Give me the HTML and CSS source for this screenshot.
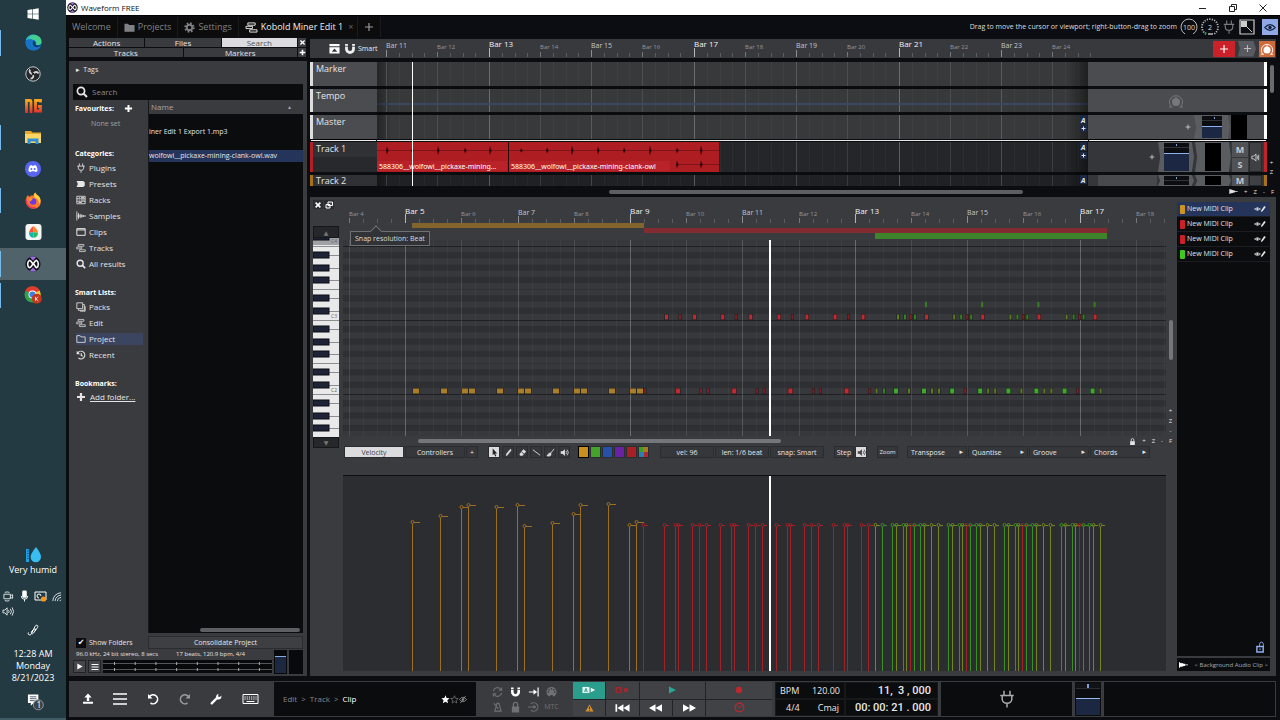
FILE: index.html
```html
<!DOCTYPE html>
<html lang="en">
<head>
<meta charset="utf-8">
<title>Waveform FREE</title>
<link rel="stylesheet" href="styles.css">
</head>
<body>
<svg class="defs" aria-hidden="true">
  <symbol id="i-logo" viewBox="0 0 16 16"><circle cx="8" cy="8" r="7.600" fill="#101018"/><path d="M5 1.300a7 7 0 0 1 6 0L8 4.500zM5 14.700a7 7 0 0 0 6 0L8 11.500z" fill="#a46be8"/><path d="M4.800 4.300C2 5.500 2 10.500 4.500 11.700 6 11.500 7 9 8 8s2 3.500 3.500 3.700C14 10.500 14 5.500 11.200 4.300M5.500 4.800L8 8l2.500-3.200" fill="none" stroke="#fff" stroke-width="1.600" stroke-linecap="round" stroke-linejoin="round"/></symbol>
  <symbol id="i-plus" viewBox="0 0 10 10"><path d="M5 1v8M1 5h8" stroke="currentColor" stroke-width="2.200"/></symbol>
  <symbol id="i-plus-thin" viewBox="0 0 10 10"><path d="M5 1v8M1 5h8" stroke="currentColor" stroke-width="1.200"/></symbol>
  <symbol id="i-x" viewBox="0 0 10 10"><path d="M2 2l6 6M8 2l-6 6" stroke="currentColor" stroke-width="2"/></symbol>
  <symbol id="i-search" viewBox="0 0 12 12"><circle cx="5" cy="5" r="3.600" fill="none" stroke="currentColor" stroke-width="1.700"/><path d="M7.700 7.700l3.300 3.300" stroke="currentColor" stroke-width="2"/></symbol>
  <symbol id="i-folder-solid" viewBox="0 0 12 12"><path d="M.5 2h4l1 1.300h6V10.500H.5z" fill="currentColor"/></symbol>
  <symbol id="i-folder" viewBox="0 0 12 12"><path d="M1 2h4l1 1.500h5V10H1z" fill="none" stroke="currentColor"/></symbol>
  <symbol id="i-gear" viewBox="0 0 12 12"><circle cx="6" cy="6" r="3" fill="none" stroke="currentColor" stroke-width="2"/><circle cx="6" cy="6" r="4.700" fill="none" stroke="currentColor" stroke-width="1.900" stroke-dasharray="1.850 1.850"/></symbol>
  <symbol id="i-edit" viewBox="0 0 14 12"><path d="M3 1h8v2.500H3zM1 4.700h7v2.500H1zM5 8.500h8V11H5z" fill="none" stroke="currentColor"/></symbol>
  <symbol id="i-plug" viewBox="0 0 12 12"><path d="M4 .5v3M8 .5v3M1.500 3.700h9M2.800 3.700v2.500a3.200 2.600 0 0 0 6.400 0V3.700M6 9v2.700" fill="none" stroke="currentColor"/></symbol>
  <symbol id="i-preset" viewBox="0 0 12 12"><path d="M1 2.500h7.500l2 1.500v4l-2 1.500H1V8l1-.8V4.800L1 4z" fill="currentColor"/></symbol>
  <symbol id="i-rack" viewBox="0 0 12 12"><path d="M1 1.500h10v9H1zM1 4.500h10M1 7.500h10M3.500 3h1M6 3h4M3.500 6h1M6 6h4M3 9h4" fill="none" stroke="currentColor"/></symbol>
  <symbol id="i-wave" viewBox="0 0 12 12"><path d="M1 .5v11M3 2.500v7M5 3.500v5M7 4v4M9 5v2M1 6h11" stroke="currentColor" fill="none"/></symbol>
  <symbol id="i-clip" viewBox="0 0 12 12"><path d="M1 2h10v8H1zM1 3.500h10" fill="none" stroke="currentColor" stroke-width="1.200"/></symbol>
  <symbol id="i-packs" viewBox="0 0 12 12"><path d="M1 1h7v7H1zM8.500 3H10v7H3V8.500M11 5v6H5" fill="none" stroke="currentColor"/></symbol>
  <symbol id="i-recent" viewBox="0 0 12 12"><path d="M2.500 3A4.600 4.600 0 1 1 3 9.600M6.300 3.800v2.700L8 7.500" fill="none" stroke="currentColor" stroke-width="1.400"/><path d="M.8 1v4h4z" fill="currentColor"/></symbol>
  <symbol id="i-knob" viewBox="0 0 16 16"><circle cx="8" cy="9" r="4" fill="currentColor"/><path d="M8 7V3.500" stroke="currentColor" stroke-width="1"/><path d="M3.300 13.700a6.500 6.500 0 1 1 9.400 0M1 14h3.500M11.500 14H15" fill="none" stroke="currentColor" stroke-width="1"/></symbol>
  <symbol id="i-magnet" viewBox="0 0 12 12"><path d="M2.500 1v5a3.500 3.500 0 0 0 7 0V1" fill="none" stroke="currentColor" stroke-width="2.800"/><path d="M1 3.300h3.200M7.800 3.300H11" stroke="#3a3b3f" stroke-width=".8"/></symbol>
  <symbol id="i-speaker" viewBox="0 0 12 12"><path d="M1 4.200h2.500L6.500 1.500v9L3.500 7.800H1z" fill="currentColor"/><path d="M8 4a3 3 0 0 1 0 4M9.500 2.300a5.500 5.500 0 0 1 0 7.400" fill="none" stroke="currentColor"/></symbol>
  <symbol id="i-eyepen" viewBox="0 0 14 8"><path d="M.5 4Q4 .5 7.500 4 4 7.500.5 4z" fill="none" stroke="currentColor" stroke-width=".8"/><circle cx="4" cy="4" r="1.300" fill="currentColor"/><path d="M8 7.500l.5-2 3.500-5 1.700 1.200-3.700 5z" fill="currentColor"/></symbol>
  <symbol id="i-lock" viewBox="0 0 12 12"><path d="M2 5.500h8V12H2z" fill="currentColor"/><path d="M3.700 6V3.300a2.300 2.300 0 0 1 4.600 0V6" fill="none" stroke="currentColor" stroke-width="1.400"/></symbol>
  <symbol id="i-audio" viewBox="0 0 10 6"><path d="M0 0h1l.5 1 1-.6.7 1 1-.6.8.9h1.500l.5.700H10v1H7l-.5.700H5l-.8.900-1-.6-.7 1-1-.6L1 6H0z" fill="currentColor"/></symbol>
</svg>

<aside class="taskbar">
  <button class="tb start" aria-label="Start"><svg viewBox="0 0 12 12" width="12" height="12"><path d="M.5 2l4.700-.7v4.400H.5zM5.800 1.200L11.700.3v5.400H5.800zM.5 6.300h4.700v4.400L.5 10zM5.800 6.300h5.900v5.400l-5.900-.9z" fill="#fff"/></svg></button>
  <nav class="tb-apps">
    <button class="tb open" aria-label="Edge"><svg viewBox="0 0 18 18" width="17" height="17"><circle cx="9" cy="9" r="8.500" fill="#1b7fd4"/><path d="M1 7C2 2 7 0 11 1c5 1 7 5 6.500 8-.5 2.500-3.500 3.500-6 2.500C13 9 11 6 8 6 5 5.500 2 6 1 7z" fill="#45cf8f"/><path d="M1 7c1-4 5-6.500 9-6-3 0-6 2-5 6z" fill="#2fb5d6"/><path d="M1 7c2-2 6-2 8 0-3 1-3 4-1 6s6 1.500 8 .5C14 17 9 18.500 5 16S0 10 1 7z" fill="#1673c4"/><path d="M9 7c2 1 3 3 2.200 4.500 2 1 5 .5 6.300-1-.5 2-3 4-6 3.500C8 13.500 7 9 9 7z" fill="#0c3f77"/></svg></button>
    <button class="tb" aria-label="OBS"><svg viewBox="0 0 16 16" width="16" height="16"><circle cx="8" cy="8" r="7.200" fill="#26272b" stroke="#c4c7c9"/><path d="M7.500 8c-2.500-.5-3.500-2.500-2.500-4.500M8.500 7.500c1.500-2 4-2 5 0M8 8.500c1 2 0 4-2.500 4.200" stroke="#d4d6d8" stroke-width="1.800" fill="none"/><circle cx="8" cy="8" r="1.300" fill="#26272b"/></svg></button>
    <button class="tb" aria-label="Newgrounds"><svg viewBox="0 0 17 15" width="17" height="15"><defs><linearGradient id="ng" x2="0" y2="1"><stop offset="0" stop-color="#f7a51c"/><stop offset="1" stop-color="#e52e2a"/></linearGradient></defs><path d="M1.500 15V2.500h3.500a1 1 0 0 1 1 1V15M15.500 4.500v-2h-5v10.500h5V8.500H13" fill="none" stroke="url(#ng)" stroke-width="2.800"/></svg></button>
    <button class="tb open" aria-label="File Explorer"><svg viewBox="0 0 16 14" width="16" height="14"><path d="M0 1h6l1.500 1.500H16V13H0z" fill="#e9a928"/><path d="M0 4h16v9H0z" fill="#fbd667"/><path d="M2.500 14V8.500h11V14h-3v-2.500h-5V14z" fill="#2e8fd8"/></svg></button>
    <button class="tb" aria-label="Discord"><svg viewBox="0 0 16 16" width="16" height="16"><circle cx="8" cy="8" r="8" fill="#5865f2"/><path d="M5 4.500l1.500-.5.5.8h2l.5-.8 1.500.5c1 1.500 1.600 3.500 1.500 5.500-.8.700-1.500 1-2.300 1.200l-.6-1H6.400l-.6 1C5 11 4.300 10.700 3.500 10 3.400 8 4 6 5 4.500z" fill="#fff"/><circle cx="6.400" cy="8" r="1" fill="#5865f2"/><circle cx="9.600" cy="8" r="1" fill="#5865f2"/></svg></button>
    <button class="tb open" aria-label="Firefox"><svg viewBox="0 0 18 18" width="17" height="17"><path d="M1.500 6C2 4.500 2.500 4 3.500 3.500c0 1 .5 1.500 1.500 1.500 1-1.500 2.500-1.500 4-1C9 2 10 1 11 .5c.2 2 2.500 2.500 4 4.500 2 3 2.500 6.500.5 9.500-3 4-10 4-13 0C1 12 .5 9 1.500 6z" fill="#ff7a2f"/><path d="M11 .5c.2 2 2.500 2.500 4 4.500 2 3 1.500 6 0 7.500C15 8 12 7 10 5.500 9 3.500 10 1 11 .5z" fill="#ffd43a"/><path d="M1.200 8c0 7 6 9.500 10 8.500-5 1.500-10-2-10-8.500z" fill="#e9254f" stroke="#f0355a" stroke-width="1.500"/><circle cx="8.500" cy="10" r="3.500" fill="#6d3ae0"/><path d="M4.500 7c1.500-1 3-.5 4 .5-1 .5-2 1-2 2.500-1.500 0-2.500-1.500-2-3z" fill="#ff9b33"/></svg></button>
    <button class="tb" aria-label="Drop app"><svg viewBox="0 0 17 16" width="17" height="16"><rect x=".5" width="16" height="16" rx="3" fill="#f4f5f5"/><path d="M8.500 2C6 4 4 6.500 4 9l4.500-1z" fill="#ff4f3d"/><path d="M8.500 2C11 4 13 6.500 13 9L8.500 8z" fill="#ff8a27"/><path d="M4 9c0 3 2 4.700 4.500 4.700V8z" fill="#11b5b0"/><path d="M13 9c0 3-2 4.700-4.500 4.700V8z" fill="#2cb865"/></svg></button>
    <button class="tb open active" aria-label="Waveform"><svg width="16" height="16"><use href="#i-logo"/></svg></button>
    <button class="tb open" aria-label="Chrome"><svg viewBox="0 0 18 18" width="18" height="18"><circle cx="8.500" cy="8.500" r="8" fill="#2fa34b"/><path d="M1.500 4.500a8 8 0 0 1 14 0L8.500 9z" fill="#e33b2e"/><path d="M15.500 4.500a8 8 0 0 1-6 12L8 8.500z" fill="#fbc72e"/><circle cx="8.500" cy="8.500" r="4" fill="#fff"/><circle cx="8.500" cy="8.500" r="3.100" fill="#3c7fe8"/><circle cx="12.800" cy="12.800" r="5" fill="#c5371b"/><path d="M11.500 10.800v4M14.300 10.800l-2.500 2.200 2.500 1.800" stroke="#fff" stroke-width=".8" fill="none"/></svg></button>
  </nav>
  <div class="weather"><svg viewBox="0 0 17 16" width="17" height="16"><path d="M1 2h3v13H1z" fill="#1ba0e6"/><path d="M2 4h2M2 6.500h2M2 9h2M2 11.500h2" stroke="#0c6ba8"/><path d="M11 0c3 4 5 7 5 10a5.200 5.200 0 0 1-10.400 0C5.600 7 8 4 11 0z" fill="#38bdf2"/></svg><span>Very humid</span></div>
  <div class="tray">
    <svg viewBox="0 0 12 12" width="11" height="11"><path d="M1 3.500h7v5H1zM8 5l2.500-1v4L8 7M2 1.500q2.500-1 5 0M2 10.500q2.500 1 5 0" fill="none" stroke="#fff" stroke-width=".9"/></svg>
    <svg viewBox="0 0 12 12" width="11" height="12"><rect x="3.500" width="5" height="8" rx="1.500" fill="#fff"/><path d="M2.500 6q0 3.500 3.500 3.500T9.500 6M6 9v3" fill="none" stroke="#fff"/></svg>
    <svg viewBox="0 0 13 12" width="13" height="12"><path d="M1 2h11v8H1zM5 8a2 2 0 1 1 2-2" fill="none" stroke="#fff"/><circle cx="9.500" cy="9" r="2.600" fill="#ff9510"/></svg>
    <svg viewBox="0 0 12 12" width="11" height="11"><path d="M2 11A9 9 0 0 1 11 2M4.500 11A6.500 6.500 0 0 1 11 4.500M7 11a4 4 0 0 1 4-4M9.500 11L11 9.500" fill="none" stroke="#dfe5e8" stroke-width="1"/></svg>
    <svg viewBox="0 0 13 12" width="12" height="11"><path d="M1 4.500h2L5.500 2v8L3 7.500H1zM7 4.500q1.500 1.500 0 3M9 3q2.500 3 0 6M11 1.500q3.200 4.500 0 9" fill="none" stroke="#fff" stroke-width=".9"/></svg>
  </div>
  <svg class="pen" viewBox="0 0 12 12" width="12" height="12"><path d="M1.500 8.500C0 11 4 12 4.500 9.500L8 2.500C9 0 12 1.500 10.500 3.500L6.500 9C5 11 3.500 8.500 5 7L6.500 5.500Q10 4 8 7" fill="none" stroke="#fff"/></svg>
  <div class="clock"><span>12:28 AM</span><span>Monday</span><span>8/21/2023</span></div>
  <button class="notes" aria-label="Notifications"><svg viewBox="0 0 18 18" width="17" height="18"><path d="M1 1h11v9H7l-3 3v-3H1z" fill="#fff"/><path d="M3 3.500h7M3 5.500h7M3 7.500h5" stroke="#234" stroke-width=".8"/><circle cx="12" cy="12" r="5.300" fill="#3d4446" stroke="#999"/><text x="10" y="15" font-size="9" fill="#fff">1</text></svg></button>
</aside>

<div class="app">
  <header class="titlebar">
    <svg width="11" height="11"><use href="#i-logo"/></svg><h1>Waveform FREE</h1>
    <div class="win">
      <button aria-label="Minimize"><svg viewBox="0 0 8 8" width="8" height="8"><path d="M0 4.500h7" stroke="#222"/></svg></button>
      <button aria-label="Restore"><svg viewBox="0 0 8 8" width="8" height="8"><path d="M.5 2.500h5v5h-5zM2.500 2.500v-2h5v5h-2" fill="none" stroke="#222"/></svg></button>
      <button aria-label="Close"><svg viewBox="0 0 8 8" width="8" height="8"><path d="M.5.500l7 7M7.500.500l-7 7" stroke="#222"/></svg></button>
    </div>
  </header>
  <div class="tabs">
    <nav>
      <button class="tab">Welcome</button>
      <button class="tab"><svg width="11" height="11"><use href="#i-folder-solid"/></svg>Projects</button>
      <button class="tab"><svg width="11" height="11"><use href="#i-gear"/></svg>Settings</button>
      <button class="tab current"><svg width="13" height="11"><use href="#i-edit"/></svg>Kobold Miner Edit 1<span class="dim">×</span></button>
      <button class="tab add" aria-label="New tab"><svg width="10" height="10"><use href="#i-plus-thin"/></svg></button>
    </nav>
    <p class="hint">Drag to move the cursor or viewport; right-button-drag to zoom</p>
    <div class="quick">
      <svg viewBox="0 0 18 18" width="18" height="18"><path d="M5 16A8 8 0 1 1 13 16" fill="none" stroke="#bbb"/><text x="9" y="11.500" text-anchor="middle" font-size="7" fill="#ddd">100</text></svg>
      <svg viewBox="0 0 18 18" width="18" height="18"><path d="M5 16A8 8 0 1 1 13 16" fill="none" stroke="#bbb" stroke-width="1.800" stroke-dasharray="1.200 1.300"/><path d="M7 16h5" stroke="#bbb" stroke-width="1.500"/><circle cx="4.500" cy="15" r="1" fill="#1ea43a"/><text x="9" y="11.500" text-anchor="middle" font-size="7" fill="#ddd">2</text></svg>
      <svg class="faint" width="14" height="14"><use href="#i-plug"/></svg>
      <svg viewBox="0 0 16 16" width="16" height="16"><path d="M1 1h14v14H1z" fill="none" stroke="#ccc" stroke-width="1.200"/><path d="M2 2h6v6H2z" fill="#ccc"/><path d="M7 7l6 6" stroke="#ccc"/></svg>
      <button class="eye" aria-label="View"><svg viewBox="0 0 14 10" width="12" height="9"><path d="M1 5Q7-1.500 13 5 7 11.500 1 5z" fill="none" stroke="#16233d" stroke-width="1.400"/><circle cx="7" cy="5" r="2" fill="#16233d"/></svg></button>
    </div>
  </div>

  <main class="work">
    <section class="side">
      <div class="side-tabs">
        <div class="tabrow"><button>Actions</button><button>Files</button><button class="on">Search</button></div>
        <button class="sq" aria-label="Close"><svg width="7" height="7"><use href="#i-x"/></svg></button>
        <div class="tabrow"><button>Tracks</button><button>Markers</button></div>
        <button class="sq" aria-label="Add"><svg width="7" height="7"><use href="#i-plus"/></svg></button>
      </div>
      <div class="browser">
        <button class="tags"><span>▸</span> Tags</button>
        <label class="search"><svg width="12" height="12"><use href="#i-search"/></svg><input type="text" placeholder="Search" aria-label="Search"></label>
        <div class="cols">
          <div class="cats">
            <h2>Favourites: <svg width="9" height="9"><use href="#i-plus"/></svg></h2>
            <p class="none">None set</p>
            <h2>Categories:</h2>
            <button><svg><use href="#i-plug"/></svg>Plugins</button>
            <button><svg><use href="#i-preset"/></svg>Presets</button>
            <button><svg><use href="#i-rack"/></svg>Racks</button>
            <button><svg><use href="#i-wave"/></svg>Samples</button>
            <button><svg><use href="#i-clip"/></svg>Clips</button>
            <button><svg><use href="#i-edit"/></svg>Tracks</button>
            <button><svg><use href="#i-search"/></svg>All results</button>
            <h2>Smart Lists:</h2>
            <button><svg><use href="#i-packs"/></svg>Packs</button>
            <button><svg><use href="#i-edit"/></svg>Edit</button>
            <button class="sel"><svg><use href="#i-folder"/></svg>Project</button>
            <button><svg><use href="#i-recent"/></svg>Recent</button>
            <h2>Bookmarks:</h2>
            <a href="#" class="addf"><svg><use href="#i-plus"/></svg><span>Add folder...</span></a>
            <label class="show"><input type="checkbox" checked>Show Folders</label>
          </div>
          <div class="files">
            <div class="list">
              <table>
                <thead><tr><th>Name<span>▴</span></th></tr></thead>
                <tbody><tr><td>iner Edit 1 Export 1.mp3</td></tr><tr class="sel"><td>wolfowi__pickaxe-mining-clank-owl.wav</td></tr></tbody>
              </table>
              <div class="thumb"></div>
            </div>
            <button class="consol">Consolidate Project</button>
          </div>
        </div>
        <div class="preview">
          <div class="pv">
            <p><span>96.0 kHz, 24 bit stereo, 8 secs</span><span>17 beats, 120.9 bpm, 4/4</span></p>
            <div class="pvrow">
              <button aria-label="Play"><svg viewBox="0 0 8 8" width="7" height="7"><path d="M1.500.500L7.500 4l-6 3.500z" fill="#fff"/></svg></button>
              <button aria-label="Menu"><svg viewBox="0 0 8 8" width="8" height="8"><path d="M.5 1.500h7M.5 4h7M.5 6.500h7" stroke="#fff" stroke-width="1.200"/></svg></button>
              <svg class="pvwave" id="pvwave"></svg>
            </div>
          </div>
          <div class="pvfader"></div><div class="pvmeter"></div>
        </div>
      </div>
    </section>

    <section class="right">
      <div class="arr-head">
        <div class="ah-left"><svg viewBox="0 0 12 12" width="11" height="11"><path d="M.5 1h11v2.500H.5zM.5 4.500h11V11.500H.5z" fill="#fff"/><path d="M6 6l3 3.500H3z" fill="#333"/></svg><svg width="12" height="12"><use href="#i-magnet"/></svg><span>Smart</span></div>
        <svg class="ruler" id="arrRuler"></svg>
        <div class="ah-right">
          <button class="redb" aria-label="Add track"><svg width="10" height="10"><use href="#i-plus-thin"/></svg></button>
          <button class="arrowb" aria-label="Add plugin"><svg width="9" height="9"><use href="#i-plus-thin"/></svg></button>
          <button class="orgb" aria-label="Automation"><svg width="14" height="14"><use href="#i-knob"/></svg></button>
        </div>
      </div>
      <div class="lanes">
        <div class="rows heads"><div>Marker</div><div>Tempo</div><div>Master</div><div class="t1">Track 1</div><div class="t2">Track 2</div></div>
        <svg class="canvas" id="arrCanvas"></svg>
        <div class="rows mixer">
          <div></div>
          <div class="mid"><svg class="faint" width="16" height="16"><use href="#i-knob"/></svg></div>
          <div><svg class="pl" width="6" height="6"><use href="#i-plus-thin"/></svg><span class="dev"><i class="fader"></i></span><i class="mtr"></i><span class="gap"></span></div>
          <div class="t1"><svg class="pl" width="6" height="6"><use href="#i-plus-thin"/></svg><span class="dev"><i class="fader"></i></span><span class="dev"><i class="mtr"></i></span><span class="ms"><button>M</button><button>S</button></span><button class="spk" aria-label="Output"><svg viewBox="0 0 10 10" width="9" height="9"><path d="M1 3.500h2L5.500 1v8L3 6.500H1zM7 3v4M8.500 2v6" fill="none" stroke="#ccc"/></svg></button></div>
          <div class="t2"><span class="blank"></span><span class="dev"><i class="fader"></i></span><span class="dev"><i class="mtr"></i></span><span class="ms"><button>M</button></span><span class="spk"></span></div>
        </div>
        <div class="vbar"><div class="vthumb"></div><span>+</span><span>Z</span></div>
      </div>
      <div class="hbar"><div class="hthumb"></div><div class="zm"><svg width="9" height="5"><use href="#i-audio"/></svg><span>+</span><span>Z</span><span>-</span></div><span class="f">F</span></div>

      <div class="editor">
        <div class="ed-left">
          <div class="ed-btns"><button aria-label="Close editor"><svg width="8" height="8"><use href="#i-x"/></svg></button><button aria-label="Pop out"><svg viewBox="0 0 8 8" width="8" height="8"><path d="M3 1h4.500v3.500H3zM1 3.500h4V7H1z" fill="#3a3b3f" stroke="#fff"/></svg></button></div>
          <div class="piano"><button aria-label="Up">▲</button><svg id="piano"></svg><button aria-label="Down">▼</button></div>
        </div>
        <div class="ed-main">
          <svg class="rruler" id="rollRuler"></svg>
          <div class="snap">Snap resolution: Beat</div>
          <svg class="roll" id="roll"></svg>
          <div class="rbar"><div class="rthumb"></div></div>
          <div class="tools">
            <div class="grp"><button class="w on">Velocity</button><button class="w">Controllers</button><button class="pm">+</button></div>
            <div class="grp icons">
              <button class="on" aria-label="Select"><svg viewBox="0 0 10 10"><path d="M3 .5L8 6H5.700L7 9l-1.200.500L4.500 6.500 3 8z" fill="#222"/></svg></button>
              <button aria-label="Pencil"><svg viewBox="0 0 10 10"><path d="M2 9l.6-2.500L7 1l1.500 1.200L4 8z" fill="#ddd"/></svg></button>
              <button aria-label="Eraser"><svg viewBox="0 0 10 10"><path d="M1.500 7L6 1.500 9 4 5 8.500H2.500z" fill="#ddd"/><path d="M4 4.500l2.500 2" stroke="#333"/></svg></button>
              <button aria-label="Line"><svg viewBox="0 0 10 10"><path d="M1 2l8 6" stroke="#ddd"/></svg></button>
              <button aria-label="Brush"><svg viewBox="0 0 10 10"><path d="M9 1L5 6M5 5.500C3 5 3 7.500 1 8.500c2 1 5 .5 4.500-2z" fill="#ddd" stroke="#ddd"/></svg></button>
              <button aria-label="Audition"><svg><use href="#i-speaker"/></svg></button>
            </div>
            <div class="grp sw"><button class="s1 on" aria-label="Orange"></button><button class="s2" aria-label="Green"></button><button class="s3" aria-label="Blue"></button><button class="s4" aria-label="Purple"></button><button class="s5" aria-label="Red"></button><button class="s6" aria-label="Mixed"></button></div>
            <div class="grp vals"><button>vel: 96</button><button>len: 1/6 beat</button><button>snap: Smart</button></div>
            <div class="grp step"><button>Step</button><button class="on" aria-label="Sound"><svg><use href="#i-speaker"/></svg></button></div>
            <button class="zoomb">Zoom</button>
            <div class="grp menus"><button>Transpose<span>▸</span></button><button>Quantise<span>▸</span></button><button>Groove<span>▸</span></button><button>Chords<span>▸</span></button></div>
          </div>
          <svg class="vel" id="vel"></svg>
        </div>
        <div class="ed-v"><div class="evthumb"></div><div class="evz"><span>+</span><span>Z</span><span>-</span><span>F</span></div><div class="evl"><svg width="7" height="7"><use href="#i-lock"/></svg><span>+</span><span>Z</span><span>-</span></div></div>
        <div class="clips">
          <ul>
            <li class="sel"><i class="o"></i><span>New MIDI Clip</span><svg><use href="#i-eyepen"/></svg></li>
            <li><i class="r"></i><span>New MIDI Clip</span><svg><use href="#i-eyepen"/></svg></li>
            <li><i class="r"></i><span>New MIDI Clip</span><svg><use href="#i-eyepen"/></svg></li>
            <li><i class="g"></i><span>New MIDI Clip</span><svg><use href="#i-eyepen"/></svg></li>
          </ul>
          <svg class="unlock" viewBox="0 0 10 13" width="9" height="12"><path d="M1 6h7v6H1z" fill="none" stroke="#8fb0ee" stroke-width="1.600"/><path d="M4 6V3.500Q4 1 6 1t2.200 2.500V6M4.500 8v2" fill="none" stroke="#8fb0ee"/></svg>
          <button class="bgclip"><svg width="9" height="6"><use href="#i-audio"/></svg>&lt; Background Audio Clip &gt;</button>
        </div>
      </div>
    </section>
  </main>

  <footer class="transport">
    <div class="tbtns">
      <button aria-label="Export"><svg viewBox="0 0 12 12"><path d="M6 .5L9.700 4.500H7.200V8H4.800V4.500H2.300zM1 8.800h10v2H1z" fill="#fff"/></svg></button>
      <button aria-label="Menu"><svg viewBox="0 0 14 12" class="wide"><path d="M0 1h14M0 6h14M0 11h14" stroke="#fff" stroke-width="1.400"/></svg></button>
      <button aria-label="Undo"><svg viewBox="0 0 12 12"><path d="M2.500 3.500A4.500 4.500 0 1 1 3.500 10" fill="none" stroke="#fff" stroke-width="1.600"/><path d="M1 1v4.500h4.500z" fill="#fff"/></svg></button>
      <button class="faint" aria-label="Redo"><svg viewBox="0 0 12 12"><path d="M9.500 3.500A4.500 4.500 0 1 0 8.500 10" fill="none" stroke="#999" stroke-width="1.600"/><path d="M11 1v4.500H6.500z" fill="#999"/></svg></button>
      <button aria-label="Tools"><svg viewBox="0 0 12 12"><path d="M1.700 10.300L7 5" stroke="#fff" stroke-width="2.400" stroke-linecap="round"/><path d="M8.500 1l-.5 2.500L10 4l1.300-1.500C12 5 10 7 7.500 6.500 5 5 6 1.500 8.500 1z" fill="#fff"/></svg></button>
      <button aria-label="Keyboard"><svg viewBox="0 0 16 12" class="kb"><path d="M.5 1.500h15v9H.5z" fill="none" stroke="#fff"/><path d="M2 4h12M2 6h12" stroke="#fff" stroke-dasharray="1.200 1"/><path d="M4 8.500h8" stroke="#fff"/></svg></button>
    </div>
    <div class="crumb"><span>Edit</span><span>&gt;</span><span>Track</span><span>&gt;</span><b>Clip</b><svg viewBox="0 0 28 10" width="26" height="9"><path d="M4.500.3L5.800 3.400l3.300.300-2.500 2.200.8 3.200-2.900-1.700L1.600 9.100l.8-3.200L0 3.700l3.300-.3z" fill="#fff"/><path d="M14.500.800l1.200 2.900 3 .2-2.300 2 .7 3-2.600-1.600L11.900 8.900l.7-3-2.300-2 3-.2z" fill="none" stroke="#888" stroke-width=".7"/><path d="M20 5q4-5 8 0-4 5-8 0zM27 1l-6 8" fill="none" stroke="#888"/><circle cx="24" cy="5" r="1.400" fill="#888"/></svg></div>
    <div class="modes">
      <svg viewBox="0 0 12 12"><path d="M1.500 5A4.500 4.500 0 0 1 9.500 3M10.500 7a4.500 4.500 0 0 1-8 2M10.500 1v3h-3M1.500 11V8h3" fill="none" stroke="#707175" stroke-width="1.200"/></svg>
      <svg><use href="#i-magnet"/></svg>
      <svg viewBox="0 0 12 12"><path d="M1 6h7M11 1v10" stroke="#fff" stroke-width="1.300"/><path d="M6 3l4 3-4 3z" fill="#fff"/></svg>
      <svg viewBox="0 0 12 12"><circle cx="6" cy="6" r="5.500" fill="#707175"/><g fill="#333"><circle cx="2.500" cy="6" r=".9"/><circle cx="9.500" cy="6" r=".9"/><circle cx="6" cy="2.500" r=".9"/><circle cx="3.500" cy="3.500" r=".9"/><circle cx="8.500" cy="3.500" r=".9"/><path d="M4.500 9.500h3V12h-3z"/></g></svg>
      <svg viewBox="0 0 12 12"><path d="M3 10.500L5.500 2h2L10 10.500zM7 8L2 2" fill="none" stroke="#707175" stroke-width="1.200"/></svg>
      <svg class="dimc"><use href="#i-lock"/></svg>
      <svg viewBox="0 0 12 12"><path d="M3 2.500a4.700 4.700 0 1 1 0 7M0 6h7" fill="none" stroke="#707175" stroke-width="1.200"/><path d="M6 3.500L9 6 6 8.500z" fill="#707175"/></svg>
      <span>MTC</span>
    </div>
    <div class="trans">
      <button class="auto" aria-label="Read automation"><svg viewBox="0 0 16 8" width="14" height="8"><path d="M.5.500h8v7h-8z" fill="#e6f5f2"/><path d="M2.800 6.500L4.500 2l1.700 4.500M3.400 5h2.200" stroke="#2a9d8c" fill="none"/><path d="M10 1.500l5 2.500-5 2.500z" fill="#fff"/></svg></button>
      <button aria-label="Write automation"><svg viewBox="0 0 16 8" width="14" height="8"><path d="M.5.500h7v7h-7z" fill="#a5262b"/><path d="M2.500 6.500L4 2l1.500 4.500M3 5h2" stroke="#3a3b3f" fill="none"/><circle cx="12.500" cy="4" r="2.700" fill="#a5262b"/></svg></button>
      <button class="x2" aria-label="Play"><svg viewBox="0 0 8 8" width="8" height="8"><path d="M1 .5L8 4 1 7.500z" fill="#27a79a"/></svg></button>
      <button class="x2" aria-label="Record"><svg viewBox="0 0 8 8" width="8" height="8"><circle cx="4" cy="4" r="3.200" fill="#c0272d"/></svg></button>
      <button aria-label="Warning"><svg viewBox="0 0 10 8" width="9" height="8"><path d="M5 0l4.500 8h-9z" fill="#d3912a"/><path d="M5 2.500V5M5 6v1" stroke="#222"/></svg></button>
      <button aria-label="To start"><svg viewBox="0 0 16 8" width="15" height="8"><path d="M.5 0h1.800v8H.5zM9 0v8L2.500 4zM15.500 0v8L9 4z" fill="#fff"/></svg></button>
      <button aria-label="Rewind"><svg viewBox="0 0 14 8" width="13" height="8"><path d="M7 0v8L0 4zM14 0v8L7 4z" fill="#fff"/></svg></button>
      <button aria-label="Forward"><svg viewBox="0 0 14 8" width="13" height="8"><path d="M0 0v8l7-4zM7 0v8l7-4z" fill="#fff"/></svg></button>
      <button class="x2" aria-label="Retrospective record"><svg viewBox="0 0 12 12" width="11" height="11"><circle cx="6" cy="6" r="4.800" fill="none" stroke="#c0272d" stroke-width="1.200"/><path d="M3.500 5h2M6 7l2.500-3" stroke="#c0272d"/></svg></button>
    </div>
    <div class="info">
      <div class="two"><span>BPM</span><span>120.00</span></div><div class="time">11,  3 , 000</div>
      <div class="two sp"><span>4/4</span><span>Cmaj</span></div><div class="time">00: 00: 21 . 000</div>
    </div>
    <div class="well plugw"><svg width="18" height="18"><use href="#i-plug"/></svg></div>
    <div class="well fadew"><i class="bigfader"></i></div>
    <div class="well last"></div>
  </footer>
</div>
<script src="app.js"></script>
</body>
</html>
```
FILE: styles.css
```css
* { box-sizing: border-box; }
:root { --panel: #3a3b3f; --well: #0b0c0e; --ink: #e4e4e6; }
html, body { height: 100%; margin: 0; }
body { display: flex; background: #0c0d10; color: var(--ink); font: 8px/12px "Open Sans", "Noto Sans", sans-serif; overflow: hidden; }
button, input { font: inherit; color: inherit; background: none; border: 0; padding: 0; margin: 0; }
h1, h2, p, ul { margin: 0; padding: 0; font: inherit; }
svg { display: block; flex: none; }
.defs { position: absolute; width: 0; height: 0; }
.faint { color: #77787b; }

/* taskbar */
.taskbar { width: 66px; flex: none; background: #233a43; display: flex; flex-direction: column; align-items: center; border-bottom: 2px solid #3f5b66; color: #fff; font-size: 9px; line-height: 12px; }
.tb { flex: 1; width: 66px; display: flex; align-items: center; justify-content: center; position: relative; }
.start { flex: none; height: 27px; }
.tb-apps { height: 284px; display: flex; flex-direction: column; }
.tb.open::before { content: ""; position: absolute; left: 0; top: 3px; bottom: 3px; width: 1px; background: #76b9ed; }
.tb.active { background: #50626a; }
.weather { margin-top: auto; display: flex; flex-direction: column; align-items: center; line-height: 14px; }
.tray { width: 66px; display: grid; grid-template-columns: repeat(4, 16px); justify-items: center; row-gap: 4px; align-items: center; margin: 13px 0 7px; }
.pen { margin-bottom: 12px; }
.clock { display: flex; flex-direction: column; align-items: center; line-height: 12px; }
.notes { margin: 9px 0 7px 4px; }

.app { flex: 1; min-width: 0; display: flex; flex-direction: column; }
.titlebar { height: 15px; flex: none; background: #fff; color: #111; display: flex; align-items: center; gap: 3px; padding-left: 1px; }
.titlebar h1 { font-size: 8px; }
.win { margin-left: auto; display: flex; gap: 22px; padding-right: 13px; }
.tabs { height: 23px; flex: none; display: flex; align-items: center; background: #0b0d13; border-top: 1px solid #000; padding-right: 2px; }
.tabs nav { display: flex; height: 20px; }
.tab { display: flex; align-items: center; gap: 3px; padding: 0 6px; background: #0c0c0d; border-right: 1px solid #1a1b1e; color: #808184; font-size: 9px; }
.tab.current { color: #eee; padding-right: 4px; }
.tab.add { color: #999; padding: 0 6px; }
.dim { color: #666; margin-left: 2px; }
.hint { margin-left: auto; font-size: 7px; color: #ddd; }
.quick { display: flex; align-items: center; gap: 3px; margin-left: 3px; }
.eye { width: 16px; height: 16px; background: #8ea9e6; display: grid; place-items: center; margin-left: 4px; }

.work { flex: 1; min-height: 0; display: flex; gap: 3px; padding-left: 3px; }
.side { width: 238px; flex: none; display: flex; flex-direction: column; gap: 4px; }
.side-tabs { display: grid; grid-template-columns: 1fr 8px; grid-auto-rows: 9px; gap: 1px; padding-right: 1px; }
.tabrow { display: flex; gap: 1px; }
.tabrow button { flex: 1; background: var(--panel); line-height: 9px; font-size: 8px; }
.tabrow .on { background: #dcdcde; color: #555; }
.sq { background: var(--panel); display: grid; place-items: center; color: #fff; }
.browser { flex: 1; min-height: 0; background: var(--panel); padding: 3px 4px 2px; display: flex; flex-direction: column; }
.tags { align-self: flex-start; padding: 0 3px; font-size: 7px; line-height: 12px; margin-bottom: 8px; }
.tags span { font-family: "DejaVu Sans", sans-serif; margin-right: 2px; }
.search { height: 16px; flex: none; display: flex; align-items: center; background: var(--well); padding: 0 3px; gap: 4px; }
.search input { flex: 1; min-width: 0; outline: 0; }
.search input::placeholder { color: #8a8a8c; }
.cols { flex: 1; min-height: 0; display: flex; }
.cats { width: 75px; flex: none; display: flex; flex-direction: column; padding: 0 5px 0 3px; }
.cats h2 { font-weight: 700; font-size: 7px; margin: 14px 0 0 -1px; line-height: 13px; color: #fff; display: flex; align-items: center; gap: 10px; white-space: nowrap; }
.cats h2:first-child { margin-top: 2px; }
.none { padding-left: 15px; font-size: 7px; margin: 2px 0; line-height: 14px; color: #a0a0a3; }
.cats button, .addf { display: flex; align-items: center; gap: 3px; height: 12px; margin: 2px 0; text-align: left; white-space: nowrap; }
.cats button svg, .addf svg { width: 10px; height: 10px; color: #e6e6e6; }
.cats .sel { background: #3b4560; }
.addf { color: inherit; gap: 4px; margin-top: 1px; }
.show { margin-top: auto; display: flex; align-items: center; gap: 3px; font-size: 7px; height: 13px; white-space: nowrap; }
.show input { appearance: none; width: 10px; height: 10px; background: var(--well); display: grid; place-items: center; }
.show input:checked::before { content: "✔"; font: 8px/8px "DejaVu Sans"; color: #fff; }
.files { flex: 1; min-width: 0; display: flex; flex-direction: column; gap: 3px; }
.list { flex: 1; background: var(--well); border-left: 1px solid #17181b; display: flex; flex-direction: column; justify-content: space-between; }
.list table { border-collapse: collapse; width: 100%; font-size: 7px; }
th { background: var(--panel); height: 14px; font-weight: 400; font-size: 8px; text-align: left; color: #a6a6a9; padding: 0 12px 0 2px; }
th span { float: right; font: 6px/12px "DejaVu Sans"; }
td { padding: 12px 0 0; height: 24px; line-height: 12px; white-space: nowrap; }
tr.sel td { background: linear-gradient(transparent 12px, #25345a 12px); }
.thumb { height: 4px; width: 100px; border-radius: 2px; background: #5e5f63; align-self: flex-end; margin: 0 3px 1px 0; }
.consol { height: 13px; border: 1px solid #2b2c30; background: #3e3f43; font-size: 7px; line-height: 11px; }
.preview { flex: none; display: flex; gap: 2px; height: 24px; margin-top: 1px; }
.pv { flex: 1; }
.pv p { display: flex; gap: 18px; font-size: 6px; line-height: 9px; padding-left: 3px; white-space: nowrap; }
.pvrow { display: flex; gap: 2px; height: 13px; margin-top: 1px; }
.pvrow button { width: 13px; background: #45464a; border: 1px solid #222327; display: grid; place-items: center; }
.pvwave { flex: 1; height: 13px; background: #08090a; min-width: 0; width: 0; }
.pvfader { width: 13px; background: linear-gradient(#08090a 5px, #86a9ea 5px 6px, #1c2740 6px); border: 1px solid #08090a; }
.pvmeter { width: 14px; background: #08090a; }

.right { flex: 1; min-width: 0; display: flex; flex-direction: column; }
.arr-head { height: 19px; margin-top: 1px; flex: none; display: flex; background: #38393d; margin-right: 4px; }
.ah-left { width: 67px; flex: none; display: flex; align-items: center; gap: 4px; padding-left: 19px; font-size: 7px; color: #eee; }
.ah-left span { margin-left: -2px; }
.ruler { flex: 1; height: 100%; width: 0; min-width: 0; overflow: hidden; }
.ah-right { display: flex; gap: 3px; align-items: center; padding-right: 1px; }
.ah-right button { height: 16px; display: grid; place-items: center; color: #fff; }
.redb { width: 22px; background: #cb2128; }
.ah-right .arrowb { width: 18px; background: #5a5b60; color: #bbb; clip-path: polygon(0 0, 85% 0, 100% 50%, 85% 100%, 0 100%, 10% 50%); }
.orgb { width: 16px; background: #cf6a3d; }
.lanes { flex: none; margin-top: 4px; display: grid; grid-template-columns: 67px 1fr 179px 13px; height: 124px; overflow: hidden; }
.rows { display: grid; grid-template-rows: 24px 23px 24px 30px 11px; gap: 3px; }
.rows > div { background: #4b4c4f; border-left: 3px solid #ddd; min-width: 0; }
.heads > div { padding-left: 3px; font-size: 9px; line-height: 14px; height: 100%; white-space: nowrap; }
.heads .t1 { border-color: #b51f24; background: linear-gradient(to bottom, #303135 15px, #28292c 15px); }
.heads .t2 { border-color: #a87117; background: #303135; line-height: 12px; }
.heads > div:nth-child(3), .mixer > div:nth-child(3) { box-shadow: 0 2px 0 -1px #000, 0 3px 0 -1px #eee; }
.canvas { width: 100%; height: 100%; overflow: hidden; }
.mixer > div { border-left: 0; border-right: 3px solid #fff; display: flex; justify-content: flex-end; align-items: stretch; overflow: hidden; gap: 1px; }
.mixer > div:nth-child(3) { overflow: visible; }
.mixer .mid { justify-content: center; align-items: center; }
.mixer .t1 { background: #35363a; border-right-color: #c3222a; }
.mixer .t2 { background: #35363a; border-right-color: #a87117; }
.pl { align-self: center; margin-right: 2px; }
.dev { width: 36px; background: #5b5c60; padding: 1px 0; display: flex; justify-content: center; clip-path: polygon(0 0, 94% 0, 100% 50%, 94% 100%, 0 100%, 6% 50%); }
.fader { width: 25px; background: linear-gradient(90deg, transparent 12px, #7f9fdf 12px 13px, transparent 13px) 0 1px / 100% 2px no-repeat, linear-gradient(#0c0d10 4px, #303238 4px 5px, #0c0d10 5px 10px, #8db0f2 10px 11px, #1b2743 11px); }
.mixer > div:nth-child(3) .fader { width: 20px; }
.mtr { width: 16px; background: #000; }
.gap { width: 16px; }
.ms { width: 16px; display: flex; flex-direction: column; gap: 1px; }
.ms button { background: #515256; flex: 1; font-weight: 700; font-size: 9px; line-height: 11px; color: #c8c8ca; }
.spk { width: 13px; background: #3f4044; border: 1px solid #26272a; display: grid; place-items: center; margin-right: 2px; }
.blank { flex: 1; margin-left: 10px; background: #48494d; }
.vbar { display: flex; flex-direction: column; align-items: center; padding: 3px 4px 0 0; font-size: 6px; line-height: 9px; }
.vthumb { width: 4px; height: 28px; border-radius: 2px; background: #6a6b6f; margin-bottom: 66px; }
.hbar { height: 11px; flex: none; display: flex; align-items: center; font-size: 6px; line-height: 8px; }
.hthumb { margin-left: 30.8%; width: 42.7%; height: 4px; border-radius: 2px; background: #5e5f63; }
.zm { margin-left: auto; display: flex; align-items: center; gap: 6px; }
.f { padding: 0 6px; }

/* editor */
.editor { flex: 1; min-height: 0; margin-right: 4px; background: var(--panel); display: grid; grid-template-columns: 33px 1fr 11px 93px; padding-right: 6px; }
.ed-left { padding: 3px 0 0 3px; }
.ed-btns { display: flex; gap: 1px; height: 9px; }
.ed-btns button { width: 10px; background: #2b2c30; display: grid; place-items: center; color: #fff; }
.piano { margin-top: 17px; width: 26px; display: grid; grid-template-rows: 12px 199px 11px; }
.piano button { background: #26272a; color: #777; font: 6px/9px "DejaVu Sans"; border: 1px solid #161719; }
#piano { width: 26px; height: 199px; }
.ed-main { display: flex; flex-direction: column; min-width: 0; position: relative; }
.rruler { width: 100%; height: 43px; flex: none; overflow: hidden; }
.snap { position: absolute; left: 7px; top: 34px; height: 15px; padding: 0 4px; border: 1px solid #6f7074; background: #323337; font-size: 7px; line-height: 13px; color: #ddd; white-space: nowrap; }
.snap::before { content: ""; position: absolute; left: 21px; top: -5px; width: 7px; height: 7px; border: 1px solid #6f7074; border-right: 0; border-bottom: 0; background: #323337; transform: rotate(45deg); }
.roll { width: 100%; height: 196px; flex: none; overflow: hidden; }
.rbar { height: 10px; flex: none; padding: 3px 0 0 75px; }
.rthumb { width: 48.500%; height: 4px; border-radius: 2px; background: #75767a; }
.tools { height: 13px; flex: none; display: flex; font-size: 7px; line-height: 11px; padding-left: 1px; margin-right: -12px; }
.grp { display: flex; gap: 1px; }
.tools button { height: 12px; border: 1px solid #2b2c2f; background: #36373b; white-space: nowrap; }
.tools .w { width: 60px; }
.tools .w.on, .icons .on, .step .on { background: #dcdcde; color: #444; }
.pm { width: 12px; }
.icons button, .step .on { width: 12px; display: grid; place-items: center; }
.icons svg, .step svg { width: 9px; height: 9px; }
.icons { gap: 2px; margin-left: 10px; }
.sw { margin-left: 8px; }
.sw button { width: 11px; border: 1px solid #2c2d30; }
.tools .s1 { background: #c98f20; border-color: #000; } .tools .s2 { background: #44a328; } .tools .s3 { background: #2551a8; } .tools .s4 { background: #6a22a4; } .tools .s5 { background: #a62025; }
.tools .s6 { background: conic-gradient(#aa7b24 25%, #b3282e 25% 50%, #2881b5 50% 75%, #3d9d29 75%); }
.vals { margin-left: 11px; } .vals button { width: 54px; }
.step { margin-left: 10px; } .step button:first-child { width: 20px; }
.tools .zoomb { width: 21px; margin-left: 10px; padding: 0; font-size: 6px; }
.menus { margin-left: 9px; } .menus button { width: 60px; display: flex; justify-content: space-between; padding: 0 3px; } .menus span { font: 7px/10px "DejaVu Sans"; }
.vel { width: 100%; flex: 1; min-height: 0; margin: 16px 0 5px; background: #2c2d30; border-top: 1px solid #0e0f11; overflow: hidden; }
.ed-v { display: flex; flex-direction: column; align-items: center; position: relative; font-size: 6px; line-height: 10px; padding-right: 2px; }
.evthumb { width: 4px; height: 40px; border-radius: 2px; background: #75767a; margin-top: 123px; }
.evz { margin-top: 46px; display: flex; flex-direction: column; align-items: center; }
.evl { position: absolute; right: 14px; top: 239px; display: flex; gap: 6px; align-items: center; }
.clips { background: var(--well); margin: 5px 0; display: flex; flex-direction: column; min-width: 0; }
.clips ul { list-style: none; }
.clips li { display: flex; align-items: center; height: 15px; padding: 0 4px 0 3px; gap: 2px; font-size: 7px; border-bottom: 1px solid #1c1d20; }
.clips li.sel { background: #25345a; }
.clips li i { width: 5px; height: 9px; border-radius: 1px; }
.clips li svg { width: 12px; height: 8px; margin-left: auto; }
.o { background: #cb9324; } .r { background: #c92127; } .g { background: #3fc81d; }
.unlock { margin: auto 5px 3px auto; }
.bgclip { height: 15px; display: flex; align-items: center; justify-content: space-between; padding: 0 2px; font-size: 6px; color: #aaa; border-top: 2px solid var(--panel); white-space: nowrap; }
.bgclip svg { color: #fff; }

/* transport */
.transport { height: 36px; flex: none; margin: 5px 4px 3px 3px; background: var(--panel); padding: 1px; display: flex; gap: 3px; }
.tbtns { width: 201px; flex: none; display: flex; justify-content: space-around; align-items: center; padding: 0 2px; }
.tbtns svg { width: 12px; height: 12px; } .tbtns .wide { width: 14px; } .tbtns .kb { width: 17px; }
.crumb { flex: none; width: 202px; background: var(--well); display: flex; align-items: center; gap: 4px; padding: 0 9px; color: #85868a; }
.crumb b { color: #fff; font-weight: 400; } .crumb svg { margin-left: auto; }
.modes { width: 91px; flex: none; display: grid; grid-template-columns: repeat(4, 18px); justify-content: center; align-content: center; justify-items: center; row-gap: 3px; color: #fff; align-items: center; }
.modes svg { width: 11px; height: 12px; } .modes .dimc, .modes span { color: #707175; } .modes span { font-size: 7px; line-height: 8px; }
.trans { width: 199px; flex: none; display: grid; grid-template-columns: repeat(6, 1fr); grid-template-rows: 1fr 1fr; gap: 1px; background: #222326; }
.trans button { background: #414246; display: grid; place-items: center; }
.trans .x2 { grid-column: span 2; } .trans .auto { background: #2a9d8c; }
.info { width: 163px; flex: none; background: var(--well); display: grid; grid-template-columns: 70px 1fr; grid-template-rows: 1fr 1fr; font-size: 9px; color: #e8e8e8; }
.info > div { border: 1px solid #17181a; display: flex; align-items: center; }
.two { justify-content: space-between; padding: 0 4px; } .info .sp { padding: 0 5px 0 10px; }
.time { justify-content: flex-end; padding-right: 6px; font: 500 11px/12px Roboto, sans-serif; white-space: pre; }
.well { background: var(--well); display: grid; place-items: center; color: #aaa; }
.plugw { width: 131px; flex: none; } .fadew { width: 26px; flex: none; } .last { flex: 1; }
.bigfader { width: 24px; height: 32px; background: linear-gradient(90deg, transparent 11px, #7f9fdf 11px 13px, transparent 13px) 0 1px / 100% 4px no-repeat, linear-gradient(#111215 5px, #2b2c30 5px 6px, #0c0d0f 6px 15px, #9ab6f0 15px 16px, #1c2742 16px); }
```
FILE: app.js
```js
const NS = 'http://www.w3.org/2000/svg';
const $ = id => document.getElementById(id);
function add(parent, tag, attrs, text) {
  const e = document.createElementNS(NS, tag);
  for (const k in attrs) e.setAttribute(k, attrs[k]);
  if (text) e.textContent = text;
  parent.appendChild(e);
  return e;
}
const rect = (p, x, y, w, h, fill, more) => add(p, 'rect', { x, y, width: w, height: h, fill, ...more });

// Bar ruler: every fourth bar is the strongest, then odd bars, then even ones
function ruler(svg, { first, last, x0, bar, base, bottom }) {
  for (let n = first; n <= last; n++) {
    const x = Math.round(x0 + (n - first) * bar);
    const level = n % 4 === 1 ? 2 : n % 2 ? 1 : 0;
    rect(svg, x, bottom - 5 - level * 2, 1, 5 + level * 2, ['#77787b', '#8d8e91', '#b5b6b9'][level]);
    add(svg, 'text', { x, y: base - level, 'font-size': 6 + level, fill: ['#96979a', '#c5c6c8', '#f2f2f4'][level] }, 'Bar ' + n);
    for (let q = 1; q < 4; q++) rect(svg, Math.round(x + q * bar / 4), bottom - 4, 1, 4, '#5c5d61');
  }
}
function gridLines(svg, x0, bar, first, last, h) {
  for (let n = first; n <= last; n++) {
    const x = Math.round(x0 + (n - first) * bar);
    rect(svg, x, 0, 1, h, '#fff', { opacity: n % 4 === 1 ? .26 : n % 2 ? .17 : .11 });
    for (let q = 1; q < 4; q++) rect(svg, Math.round(x + q * bar / 4), 0, 1, h, '#fff', { opacity: .035 });
  }
}

// Arrangement
ruler($('arrRuler'), { first: 11, last: 24, x0: 9, bar: 51.25, base: 10, bottom: 18 });
const arr = $('arrCanvas');
[[0, 24, '#38393a'], [27, 23, '#38393a'], [53, 24, '#38393a'], [80, 30, '#252629'], [113, 11, '#202124']]
  .forEach(([y, h, c]) => rect(arr, 0, y, '100%', h, c));
gridLines(arr, 9, 51.25, 11, 24, 124);
[24, 50, 77, 110].forEach(y => rect(arr, 0, y, '100%', 3, '#0b0c0e'));
rect(arr, 0, 41, '100%', 2, '#3b4863');
const defs = add(arr, 'defs', {});
const shade = add(defs, 'linearGradient', { id: 'shade' });
[[0, .35], [.02, 0], [.97, 0], [1, .45]].forEach(([offset, o]) => add(shade, 'stop', { offset, 'stop-color': '#000', 'stop-opacity': o }));
rect(arr, 0, 0, '100%', 124, 'url(#shade)');
rect(arr, 0, 78, '100%', 1, '#e6e6e6');
[[0, 131], [132, 210]].forEach(([x, w]) => {
  rect(arr, x, 80, w, 30, '#ad1d22');
  rect(arr, x, 88, w, 1, '#7c1418');
});
rect(arr, 131, 80, 1, 30, '#2a0507');
rect(arr, 300, 102, 42, 1, '#7c1418');
[10, 35, 61, 88, 113, 144, 170, 195, 221, 247, 273, 300, 324].forEach((x, i) => {
  const h = [8, 4, 9, 6, 9, 4, 6, 10, 8, 6, 10, 6, 10][i];
  add(arr, 'path', { d: `M${x} ${88.5 - h / 2}l1 ${h / 2 - 1}l1 1l-1 1l-1 ${h / 2 - 1}l-1-${h / 2}z`, fill: '#350609' });
});
[300, 324].forEach(x => add(arr, 'path', { d: `M${x} 98.500l1 3l1 1l-1 1l-1 3l-1-4z`, fill: '#350609' }));
rect(arr, 0, 99, 130, 10, '#b92228');
rect(arr, 132, 99, 161, 10, '#b92228');
const clipText = { y: 107, 'font-size': 7, 'font-family': 'Noto Sans', fill: '#fff' };
add(arr, 'text', { x: 2, ...clipText }, '588306__wolfowi__pickaxe-mining...');
add(arr, 'text', { x: 134, ...clipText }, '588306__wolfowi__pickaxe-mining-clank-owl');
[61, 88, 121].forEach(y => {
  const g = add(arr, 'svg', { x: '100%', y: y - 8, overflow: 'visible' });
  rect(g, -8, 0, 7, 9, '#1d2842');
  add(g, 'text', { x: -7, y: 7.500, 'font-size': 7, 'font-weight': 700, 'font-style': 'italic', fill: '#dfe5f2' }, 'A');
  if (y < 120) {
    rect(g, -8, 10, 7, 7, '#1d2842');
    add(g, 'path', { d: 'M-4.500 11.500v4M-6.500 13.500h4', stroke: '#dfe5f2', 'stroke-width': 1 });
  }
});
rect(arr, 35, 0, 1, 124, '#fff');

// Preview waveform
const pv = $('pvwave');
rect(pv, 0, 3, '100%', 1, '#55565a'); rect(pv, 0, 9, '100%', 1, '#55565a');
for (let x = 11; x < 170; x += 20.700) { rect(pv, x, 2, 1, 3, '#aaa'); rect(pv, x, 8, 1, 3, '#aaa'); }

// Piano keys; C3 bottom edge lies at y = 82, an octave is 74px
const piano = $('piano'), row = 74 / 12;
rect(piano, 0, 0, 26, 199, '#e9e9ea');
rect(piano, 0, 0, 26, 7, '#a0a1a5');
for (let o = -2; o < 3; o++) {
  const c = 82 - o * 74;
  [0, 1.500, 3.500, 5, 6.500, 8.500, 10.500].forEach(s => rect(piano, 0, Math.round(c - s * row), 26, 1, '#8c8d91'));
  [1, 3, 6, 8, 10].forEach(s => rect(piano, 0, Math.round(c - (s + 1) * row), 16, 6, '#1e2436', { stroke: '#0b0d14', 'stroke-width': 1 }));
}
[[5, 'C4'], [80, 'C3'], [154, 'C2']].forEach(([y, t]) => add(piano, 'text', { x: 18, y, 'font-size': 5, fill: '#666' }, t));

// Piano roll
const BAR = 56.2;
const rr = $('rollRuler');
ruler(rr, { first: 4, last: 18, x0: 6, bar: BAR, base: 19, bottom: 26 });
rect(rr, 69, 26, 232, 5, '#83642d');
rect(rr, 301, 31, 463, 5, '#822b30');
rect(rr, 532, 36, 232, 6, '#3f832d');

const roll = $('roll');
rect(roll, 0, 0, '100%', 196, '#37383c');
for (let o = -2; o < 3; o++) {
  const c = 80 - o * 74;
  [1, 3, 6, 8, 10].forEach(s => rect(roll, 0, c - (s + 1) * row, '100%', row, '#2e2f32'));
  rect(roll, 0, Math.round(c), '100%', 1, '#1e1f22');
  rect(roll, 0, Math.round(c - 5 * row), '100%', 1, '#303134');
}
gridLines(roll, 6, BAR, 4, 18, 196);
const C3 = 74, C2 = 148;
const note = (x, y, w, fill, h = 6) => rect(roll, x - 343, y + .5, w, h - 1, fill, { stroke: '#1b1c1e', 'stroke-width': 1, 'paint-order': 'stroke' });
const orange = [412, 440, 461, 468, 496, 517, 524, 552, 573, 580, 608, 629, 636];
orange.forEach(x => note(x + 1, C2, 6, '#aa7d2a'));
note(644, C2, 2, '#7c2025');
const RED = '#c4282e', DRED = '#7e1f24', OLIVE = '#5d7a1c', GREEN = '#3da82a', DGREEN = '#33801f';
for (let k = 0; k < 4; k++) {
  const d = k * BAR;
  [[665, 3, RED], [679, 2, DRED], [693, 3, RED]].forEach(([x, w, c]) => note(x + d, C3, w, c));
  [[676, 4, RED], [700, 2, DRED], [707, 2, k === 3 ? OLIVE : DRED]].forEach(([x, w, c]) => note(x + d, C2, w, c));
  [[897, 2, OLIVE], [904, 2, DGREEN], [910, 2, DRED], [914, 2, DGREEN], [925, 3, RED]].forEach(([x, w, c]) => note(x + d, C3, w, c));
  rect(roll, 925 - 343 + d, 62, 2, 5, DGREEN);
  [[894, 4, GREEN], [908, 2, k % 2 ? DRED : OLIVE], [922, 4, GREEN], [931, 2, OLIVE], [938, 2, OLIVE]].forEach(([x, w, c]) => {
    if (k < 3 || x < 938) note(x + d, C2, w, c);
  });
}
note(883, C2, 2, DGREEN);
rect(roll, 426, 0, 2, 196, '#fff');

// Velocity stems
const vel = $('vel');
function stem(x, y, color, tail) {
  x -= 343; y -= 476;
  rect(vel, x, y + 2, 1, 400, color);
  add(vel, 'circle', { cx: x + .5, cy: y, r: 1.500, fill: 'none', stroke: color, 'stroke-width': 1 });
  rect(vel, x + 2, Math.round(y - .5), tail, 1, color);
}
const tops = [522, 516, 507, 505, 507, 505, 526, 523, 514, 505, 504, 525, 522];
orange.forEach((x, i) => stem(x, tops[i], '#9a6f20', 6));
const SR = '#a32026', SG = '#3a8f24', SO = '#73831e';
stem(643, 525, SR, 3);
for (let k = 0; k < 4; k++) {
  [664, 675, 678, 692, 699, 706].forEach((x, i) => { if (k < 3 || i < 5) stem(x + Math.round(k * BAR), 525, SR, 3); });
  [[892, SG], [896, SO], [903, SG], [906, SO], [910, SR], [914, SG], [920, SG], [924, SO], [931, SO], [938, SO]].forEach(([x, c]) => {
    if (k < 3 || x < 938) stem(x + Math.round(k * BAR), 525, c, 3);
  });
}
stem(875, 525, SO, 3);
stem(882, 525, SG, 3);
rect(vel, 426, 0, 2, 400, '#fff');
```
